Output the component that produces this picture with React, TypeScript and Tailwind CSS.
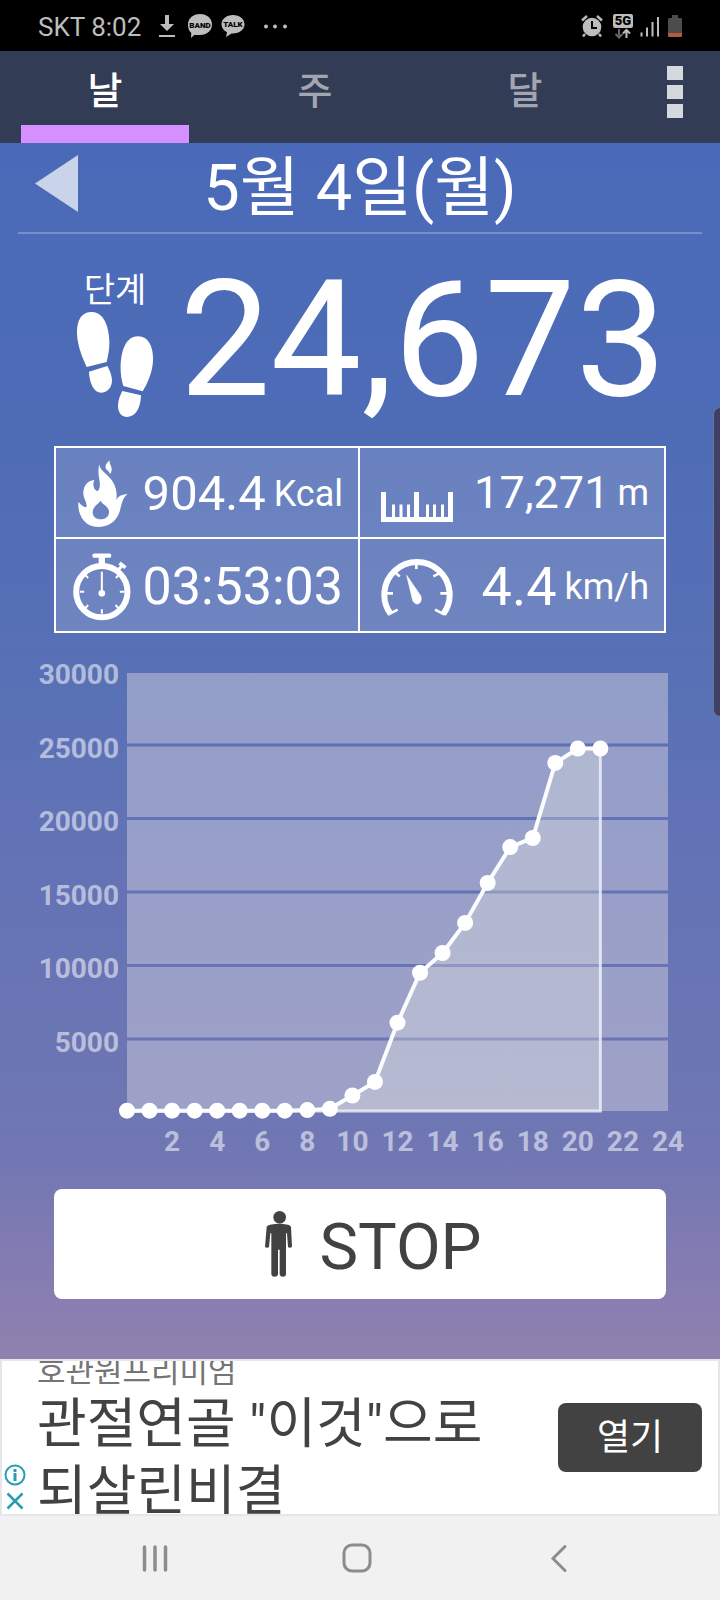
import { useState } from "react";
import type { ReactNode } from "react";

const TABS = ["날", "주", "달"];

// cumulative steps at the start of each hour
const HOURLY = [
  20, 20, 20, 20, 20, 20, 20, 20, 60, 150, 1060, 1990, 6050, 9470, 10820, 12880,
  15620, 18080, 18700, 23840, 24830, 24830,
];

export default function App() {
  return (
    <div className="relative w-full bg-[#f1f1f1] font-['Roboto','Noto_Sans_CJK_KR',sans-serif]">
      <StatusBar />
      <Tabs />
      <main className="bg-[linear-gradient(to_bottom,#4a6ab9_0%,#4e6cb6_24%,#5971b5_46%,#6172b6_55%,#6a75b4_72%,#7077b3_83%,#7f7bb2_90%,#8b7fb1_97%,#9082ae_100%)]">
        <DateHeader />
        <Steps />
        <Stats />
        <Chart />
        <div className="px-[54px] pb-[60px]">
          <button className="flex h-[110px] w-full items-center justify-center gap-[27px] rounded-lg bg-white pl-[27px] text-[65px] leading-none text-[#424242]">
            <PersonIcon />
            <span className="pt-[6px]">STOP</span>
          </button>
        </div>
      </main>
      <Ad />
      <NavBar />
      <div className="absolute top-[407px] right-0 h-[310px] w-[7px] rounded-l-lg border border-r-0 border-[#6f7496] bg-[#403f68]" />
    </div>
  );
}

function StatusBar() {
  return (
    <header className="flex h-[51px] items-center justify-between bg-black pr-[38px] pl-[38px] text-[#bdbdbd]">
      <div className="flex items-center">
        <span className="pt-[2px] text-[26px] leading-none">SKT 8:02</span>
        <svg className="ml-[18px] h-6 w-4" viewBox="0 0 16 24" fill="currentColor">
          <path d="M6 1h4v9h5l-7 7-7-7h5zM0 21h16v2H0z" />
        </svg>
        <svg className="ml-[13px] h-6 w-6" viewBox="0 0 24 24">
          <path
            fill="currentColor"
            d="M12 0c7 0 12 4.500 12 10.500S19 21 12 21c-2 0-4 0-5.500-.3L3 24l.3-5C.8 17 0 14 0 10.500 0 4.500 5 0 12 0z"
          />
          <text x="12" y="14" textAnchor="middle" fontSize="8" fontWeight="900" fill="#000">
            BAND
          </text>
        </svg>
        <svg className="ml-[9px] h-6 w-6" viewBox="0 0 24 24">
          <path
            fill="currentColor"
            d="M12 1c6.500 0 11.500 4 11.500 9.300S18.500 19.500 12 19.500l-1.500-.1L5 23l1-4.800C2.500 16.500.5 13.700.5 10.300.5 5 5.500 1 12 1z"
          />
          <text x="12" y="13" textAnchor="middle" fontSize="8" fontWeight="900" fill="#000">
            TALK
          </text>
        </svg>
        <svg className="ml-[18px] h-6 w-6" viewBox="0 0 24 24" fill="currentColor">
          <circle cx="3" cy="12.500" r="2" />
          <circle cx="12" cy="12.500" r="2" />
          <circle cx="22" cy="12.500" r="2" />
        </svg>
      </div>
      <div className="flex items-center">
        <svg className="h-6 w-[22px]" viewBox="0 0 22 24" fill="currentColor">
          <circle cx="11" cy="13" r="9.300" />
          <path
            d="M1 6.500 6 2M21 6.500 16 2M4 20l-2 2.500M18 20l2 2.500"
            stroke="currentColor"
            strokeWidth="2.400"
          />
          <path d="M11 7v7h5" fill="none" stroke="#000" strokeWidth="2" />
        </svg>
        <svg className="ml-[10px] h-[26px] w-5" viewBox="0 0 20 26">
          <rect width="20" height="14" y="1" rx="2" fill="currentColor" />
          <text x="10" y="12" textAnchor="middle" fontSize="13" fontWeight="900" fill="#000">
            5G
          </text>
          <path d="M6 16v8M2.500 21 6 24.500 9.500 21" fill="none" stroke="#666" strokeWidth="2" />
          <path d="M13.500 25v-8M10 20.500l3.500-3.500 3.500 3.500" fill="none" stroke="currentColor" strokeWidth="2" />
        </svg>
        <svg className="ml-[7px] h-6 w-[19px]" viewBox="0 0 19 24" stroke="currentColor" strokeWidth="2">
          <path d="M1.500 22.500v-4M7 22.500v-9M12.500 22.500V8M18 22.500V3" />
        </svg>
        <svg className="ml-[9px] h-6 w-[14px]" viewBox="0 0 14 24">
          <path d="M4 1h6v3h2.500c1 0 1.500.6 1.500 1.500V19H0V5.500C0 4.600.5 4 1.500 4H4z" fill="#4c4c4c" />
          <path d="M0 19h14v2.500c0 1-.5 1.500-1.500 1.500h-11C.5 23 0 22.500 0 21.500z" fill="#b4593a" />
        </svg>
      </div>
    </header>
  );
}

function Tabs() {
  const [active, setActive] = useState(0);

  return (
    <nav className="flex h-[92px] bg-[#323c54]">
      <div className="flex flex-[7]" role="tablist">
        {TABS.map((label, i) => (
          <button
            key={label}
            role="tab"
            aria-selected={i === active}
            onClick={() => setActive(i)}
            className={`flex flex-1 flex-col items-stretch px-[21px] text-[38px] font-medium ${
              i === active ? "text-white" : "text-[#a2a6b0]"
            }`}
          >
            <span className="flex h-[74px] items-center justify-center pt-[5px] leading-none">
              {label}
            </span>
            <span className={`h-[18px] ${i === active ? "bg-[#d58fff]" : ""}`} />
          </button>
        ))}
      </div>
      <button
        aria-label="메뉴"
        className="flex flex-1 flex-col items-center gap-[5px] pt-[15px]"
      >
        <span className="h-[14px] w-4 bg-[#d6d8df]" />
        <span className="h-[14px] w-4 bg-[#d6d8df]" />
        <span className="h-[14px] w-4 bg-[#d6d8df]" />
      </button>
    </nav>
  );
}

function DateHeader() {
  return (
    <div className="mx-[18px] grid h-[91px] grid-cols-[1fr_auto_1fr] items-center border-b-2 border-[#768fcb]">
      <button aria-label="이전 날" className="ml-[17px] justify-self-start pb-2">
        <svg className="h-[57px] w-[43px]" viewBox="0 0 43 57">
          <path d="M43 0v57L0 28.500z" fill="#c9d3ea" />
        </svg>
      </button>
      <h1 className="pt-[2px] text-[65px] leading-none text-white">5월 4일(월)</h1>
    </div>
  );
}

function Steps() {
  return (
    <section className="flex h-[212px] items-center justify-center gap-[26px] pt-1 pl-[23px] text-white">
      <div className="flex w-[77px] flex-col items-center">
        <span className="text-[34px] leading-[44px]">단계</span>
        <svg className="h-[105px] w-[76px]" viewBox="111 217 228 315" fill="currentColor">
          <path d="M152 217c35-2 54 35 56 86 1 26-4 46-8 64l-60 15c-13-28-27-62-29-98-1-38 10-65 41-67z" />
          <path d="M147 396l55-17c7 13 13 26 14 42 0 21-12 37-31 38-22 1-37-27-38-63z" />
          <path d="M295 290c32 1 45 33 44 73-2 36-16 66-31 92l-58-16c-7-20-9-44-8-67 3-48 20-83 53-82z" />
          <path d="M247 454l56 13c-1 35-14 64-41 65-20 0-29-17-28-37 1-16 7-29 13-41z" />
        </svg>
      </div>
      <span className="pb-1 text-[162px] leading-none">24,673</span>
    </section>
  );
}

function Stats() {
  return (
    <section className="mx-[54px] grid grid-cols-2 border-2 border-white bg-white/15 text-white">
      <Stat
        className="h-[91px] border-r-2 border-b-2 pt-[2px] pl-[22px]"
        icon={
          <svg className="h-[68px] w-[50px]" viewBox="114 90 150 204" fill="currentColor">
            <path
              fillRule="evenodd"
              d="M178 103c1 27 52 37 52 93 0 8-1 11 0 14 3-11 14-16 33-18-20 15-18 40-27 61-11 24-31 38-62 38-38 0-59-32-59-67 0-3 0-5 1-8 9 11 17 17 23 15 3-13-7-21-9-38-1-24 11-41 33-43-6 13-3 29 10 34 17-21-5-46 5-81zM181 212c-2 7-23 17-23 34 0 13 9 22 24 22s25-9 25-22c0-17-18-21-26-34z"
            />
            <path d="M208 90c0 17 15 25 2 43-1-13-16-11-13-26 1-8 8-10 11-17z" />
          </svg>
        }
      >
        <span className="text-[49px]">904.4</span>
        <span className="text-4xl">Kcal</span>
      </Stat>
      <Stat
        className="h-[91px] border-b-2 pl-[21px]"
        icon={
          <svg className="mt-[29px] h-[30px] w-[72px]" viewBox="0 0 72 30" fill="currentColor">
            <path d="M0 0h5v25h28V0h5v25h29V0h5v30H0z" />
            <path d="M11 12.500h3V26h-3zM18.500 12.500h3V26h-3zM26 12.500h3V26h-3zM45 12.500h3V26h-3zM52 12.500h3V26h-3zM60 12.500h3V26h-3z" />
          </svg>
        }
      >
        <span className="text-[45px]">17,271</span>
        <span className="text-4xl">m</span>
      </Stat>
      <Stat
        className="h-[92px] border-r-2 pt-[3px] pl-[17px]"
        icon={
          <svg className="h-[68px] w-[58px]" viewBox="98 367 173 204" fill="none" stroke="currentColor">
            <circle cx="184" cy="483" r="77" strokeWidth="18" />
            <path d="M162 375h44" strokeWidth="13" strokeLinecap="round" />
            <path d="M184 370v33" strokeWidth="19" />
            <path d="M228 424l19-22" strokeWidth="9" />
            <path d="M237 397l18 14" strokeWidth="11" />
            <path
              strokeWidth="6"
              d="M118 483h13M238 483h14M184 536v13M131 430l12 12M226 442l12-13M131 536l12-13M237 536l-12-13"
            />
            <path d="M184 423v62" strokeWidth="6" />
            <circle cx="184" cy="488" r="10" fill="currentColor" stroke="none" />
          </svg>
        }
      >
        <span className="text-[52px]">03:53:03</span>
      </Stat>
      <Stat
        className="h-[92px] pt-[3px] pl-[20px]"
        icon={
          <svg className="h-[60px] w-[73px]" viewBox="92 377 219 180" fill="none" stroke="currentColor">
            <path d="M124 548a98 98 0 1 1 158 0" strokeWidth="18" />
            <path d="M118 549l27-14M286 550l-29-15" strokeWidth="8" />
            <path
              d="M201 390v23M136 421l15 15M268 427l-16 8M108 486h23M273 486h23"
              strokeWidth="8"
            />
            <path
              d="M172 432l41 60c5 9 3 21-5 25-7 3-14-1-18-10z"
              fill="currentColor"
              strokeWidth="2"
            />
          </svg>
        }
      >
        <span className="text-[54px]">4.4</span>
        <span className="text-4xl">km/h</span>
      </Stat>
    </section>
  );
}

function Stat({
  icon,
  className,
  children,
}: {
  icon: ReactNode;
  className: string;
  children: ReactNode;
}) {
  return (
    <div className={`flex items-center justify-between border-white pr-[15px] ${className}`}>
      {icon}
      <div className="flex items-center gap-2 leading-none">{children}</div>
    </div>
  );
}

function Chart() {
  const left = 127;
  const top = 40;
  const bottom = 478;
  const width = 541;
  const gap = 3;
  const band = (bottom - top - 5 * gap) / 6;
  const points = HOURLY.map((v, i) => ({
    x: left + (i * width) / 24,
    y: bottom - (v / 30000) * (bottom - top),
  }));
  const line = points.map((p) => `${p.x},${p.y}`).join(" ");
  const last = points[points.length - 1];

  return (
    <svg className="block h-auto w-full" viewBox="0 0 720 556">
      {[0, 1, 2, 3, 4, 5].map((i) => (
        <rect
          key={i}
          x={left}
          y={top + i * (band + gap)}
          width={width}
          height={band}
          fill="#cecbdb"
          fillOpacity="0.5"
        />
      ))}
      <polygon
        points={`${line} ${last.x},${bottom} ${left},${bottom}`}
        fill="#f8fbe8"
        fillOpacity="0.27"
      />
      <path
        d={`M${last.x} ${last.y}V${bottom}H${left}`}
        fill="none"
        stroke="#f0f2ff"
        strokeOpacity="0.8"
        strokeWidth="3"
      />
      <polyline points={line} fill="none" stroke="#fbfcff" strokeWidth="4" />
      {points.map((p, i) => (
        <circle key={i} cx={p.x} cy={p.y} r="8" fill="#fff" />
      ))}
      <g fill="#fff" fillOpacity="0.55" fontSize="28" fontWeight="700">
        {[30000, 25000, 20000, 15000, 10000, 5000].map((v, i) => (
          <text key={v} x="119" y={51 + i * (band + gap)} textAnchor="end">
            {v}
          </text>
        ))}
        {[2, 4, 6, 8, 10, 12, 14, 16, 18, 20, 22, 24].map((h) => (
          <text key={h} x={left + (h * width) / 24} y="518" textAnchor="middle">
            {h}
          </text>
        ))}
      </g>
    </svg>
  );
}

function PersonIcon() {
  return (
    <svg className="h-[66px] w-[27px]" viewBox="795 573 81 198" fill="currentColor">
      <circle cx="839" cy="592" r="19" />
      <path d="M800 620c5-7 22-8 37-8s32 1 36 8l3 60c-4 4-9 4-12 1l-3-41h-3v123c0 10-18 10-19 0v-74h-5v74c-1 10-19 10-20 0V640h-3l-4 41c-3 3-8 3-12 0z" />
    </svg>
  );
}

function Ad() {
  return (
    <aside className="flex h-[157px] overflow-hidden border-2 border-[#e6e6ea] bg-white">
      <div className="flex w-[35px] shrink-0 flex-col items-center justify-end gap-1 pr-[9px] pb-[2px] text-[#2a9db2]">
        <svg className="h-[22px] w-[22px]" viewBox="0 0 22 22" fill="none" stroke="currentColor">
          <circle cx="11" cy="11" r="9.500" strokeWidth="2" />
          <path d="M11 9v8M11 5v3" strokeWidth="3" />
        </svg>
        <svg className="h-[22px] w-[22px]" viewBox="0 0 22 22" fill="none" stroke="currentColor">
          <path d="M3.500 3.500l15 15M18.500 3.500l-15 15" strokeWidth="2.500" />
        </svg>
      </div>
      <div className="-mt-[9px] flex-1 whitespace-nowrap">
        <div className="text-[31px] leading-[39px] text-[#757575]">호관원프리미엄</div>
        <p className="text-[54px] leading-[67px] text-[#424242]">
          관절연골 "이것"으로
          <br />
          되살린비결
        </p>
      </div>
      <button className="mt-[42px] mr-4 h-[69px] w-36 rounded-lg bg-[#424242] text-4xl leading-none text-white">
        열기
      </button>
    </aside>
  );
}

function NavBar() {
  return (
    <nav className="flex h-[84px] items-center justify-center gap-[172px] pr-[6px] text-[#8c8c8c]">
      <button aria-label="최근 앱">
        <svg className="h-[30px] w-[30px]" viewBox="0 0 30 30" stroke="currentColor" strokeWidth="3.500" strokeLinecap="round">
          <path d="M4.500 4v23M15 4v23M25.500 4v23" />
        </svg>
      </button>
      <button aria-label="홈">
        <svg className="h-[30px] w-[30px]" viewBox="0 0 30 30" fill="none" stroke="currentColor" strokeWidth="3">
          <rect x="2" y="2" width="26" height="26" rx="8" />
        </svg>
      </button>
      <button aria-label="뒤로">
        <svg className="h-[30px] w-[30px]" viewBox="0 0 30 30" fill="none" stroke="currentColor" strokeWidth="3" strokeLinecap="round">
          <path d="M21 3.500 9 15.500l12 12" />
        </svg>
      </button>
    </nav>
  );
}
